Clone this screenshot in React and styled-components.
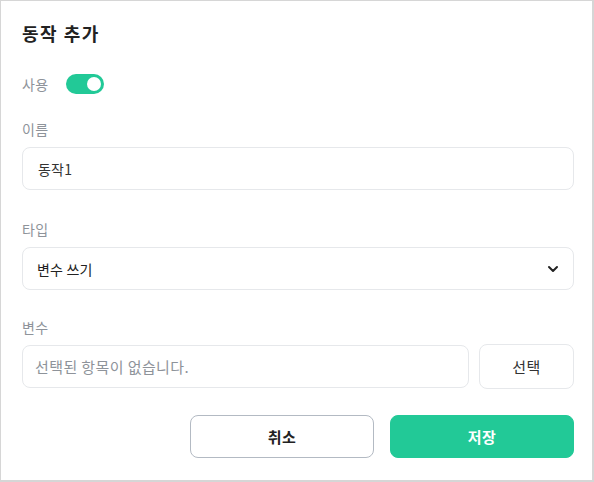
import React, { useState } from "react"
import styled, { createGlobalStyle } from "styled-components"
import { ChevronDown } from "lucide-react"

const GlobalStyle = createGlobalStyle`
  * { box-sizing: border-box; }
  html, body { margin: 0; padding: 0; background: #fff; }
  body {
    font-family: "Noto Sans CJK KR", "Noto Sans", sans-serif;
    -webkit-font-smoothing: antialiased;
  }
`

const Dialog = styled.div`
  width: 594px;
  height: 482px;
  background: #fff;
  border: 1px solid #d6d6d6;
  border-right-width: 2px;
  border-bottom-width: 2px;
  padding: 20px 18px 0 21px;
  display: flex;
  flex-direction: column;
`

const Title = styled.h2`
  margin: 0;
  font-size: 18px;
  line-height: 24px;
  font-weight: 700;
  letter-spacing: 1.5px;
  color: #222;
`

const ToggleRow = styled.div`
  display: flex;
  align-items: center;
  gap: 18px;
  margin-top: 29px;
  height: 20px;
`

const Label = styled.div`
  font-size: 14px;
  line-height: 20px;
  color: #8e939a;
  letter-spacing: 0.3px;
  margin-bottom: ${(p) => (p.$inline ? 0 : "8px")};
`

const Switch = styled.button`
  width: 38px;
  height: 20px;
  border: none;
  padding: 0;
  border-radius: 10px;
  background: ${(p) => (p.$on ? "#22c997" : "#cfd4da")};
  position: relative;
  cursor: pointer;

  &::after {
    content: "";
    position: absolute;
    top: 3px;
    left: ${(p) => (p.$on ? "21px" : "3px")};
    width: 14px;
    height: 14px;
    border-radius: 50%;
    background: #fff;
  }
`

const Field = styled.div`
  margin-top: ${(p) => p.$top || "28px"};
`

const Box = styled.div`
  height: 43px;
  border: 1px solid #e6e8eb;
  border-radius: 8px;
  display: flex;
  align-items: center;
  padding: 0 16px 0 ${(p) => (p.$muted ? "12px" : "15px")};
  font-size: ${(p) => (p.$muted ? "15px" : "14px")};
  letter-spacing: ${(p) => (p.$muted ? "0.4px" : "0.2px")};
  color: ${(p) => (p.$muted ? "#8e939a" : "#333")};
  flex: 1;
  min-width: 0;
`

const SelectBox = styled(Box)`
  justify-content: space-between;
  padding-left: 14px;
  padding-right: 12px;
  color: #222;
`

const Row = styled.div`
  display: flex;
  gap: 10px;
`

const PickButton = styled.button`
  width: 95px;
  height: 45px;
  border: 1px solid #e6e8eb;
  border-radius: 8px;
  background: #fff;
  font-family: inherit;
  font-size: 15px;
  letter-spacing: 0.5px;
  color: #333;
  margin-top: -1px;
  margin-bottom: -1px;
`

const Actions = styled.div`
  display: flex;
  justify-content: flex-end;
  gap: 16px;
  margin-top: 27px;
`

const ActionButton = styled.button`
  width: 184px;
  height: 43px;
  border-radius: 8px;
  font-family: inherit;
  font-size: 15px;
  font-weight: 700;
  letter-spacing: 0.5px;
  border: 1px solid ${(p) => (p.$primary ? "#22c997" : "#b3bac3")};
  background: ${(p) => (p.$primary ? "#22c997" : "#fff")};
  color: ${(p) => (p.$primary ? "#fff" : "#222")};
`

export default function App() {
  const [on, setOn] = useState(true)
  return (
    <>
      <GlobalStyle />
      <Dialog>
        <Title>동작 추가</Title>
        <ToggleRow>
          <Label $inline>사용</Label>
          <Switch $on={on} onClick={() => setOn(!on)} />
        </ToggleRow>
        <Field $top="25px">
          <Label>이름</Label>
          <Box>동작1</Box>
        </Field>
        <Field $top="29px">
          <Label>타입</Label>
          <SelectBox>
            변수 쓰기
            <ChevronDown size={16} strokeWidth={3} color="#222" />
          </SelectBox>
        </Field>
        <Field $top="27px">
          <Label>변수</Label>
          <Row>
            <Box $muted>선택된 항목이 없습니다.</Box>
            <PickButton>선택</PickButton>
          </Row>
        </Field>
        <Actions>
          <ActionButton>취소</ActionButton>
          <ActionButton $primary>저장</ActionButton>
        </Actions>
      </Dialog>
    </>
  )
}
